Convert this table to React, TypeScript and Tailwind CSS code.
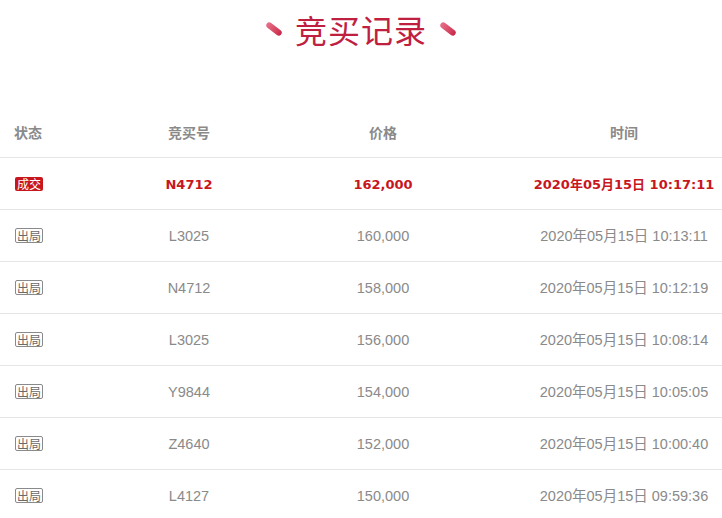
const rows = [
  { status: 'win', no: 'N4712', price: '162,000', time: '2020年05月15日 10:17:11' },
  { status: 'out', no: 'L3025', price: '160,000', time: '2020年05月15日 10:13:11' },
  { status: 'out', no: 'N4712', price: '158,000', time: '2020年05月15日 10:12:19' },
  { status: 'out', no: 'L3025', price: '156,000', time: '2020年05月15日 10:08:14' },
  { status: 'out', no: 'Y9844', price: '154,000', time: '2020年05月15日 10:05:05' },
  { status: 'out', no: 'Z4640', price: '152,000', time: '2020年05月15日 10:00:40' },
  { status: 'out', no: 'L4127', price: '150,000', time: '2020年05月15日 09:59:36' },
];

const Dash = () => (
  <span className="inline-block w-[18px] h-[6px] rounded-full rotate-[38deg] bg-gradient-to-r from-[#e8708a] to-[#c8234a]" />
);

export default function App() {
  return (
    <div className="w-[722px] h-[518px] overflow-hidden bg-white font-['Noto_Sans_CJK_SC',sans-serif]">
      {/* 标题 */}
      <div className="flex items-center justify-center gap-[12px] h-[58px]">
        <Dash />
        <h1 className="text-[32px] leading-[40px] text-[#c0203f] tracking-[1px]">竞买记录</h1>
        <Dash />
      </div>

      {/* 表格 */}
      <div className="mt-[49px]">
        <div className="grid grid-cols-[100px_178px_210px_1fr] h-[51px] items-center border-b border-[#e6e6e6] text-[14px] font-bold text-[#8a8a8a]">
          <div className="pl-[14px]">状态</div>
          <div className="text-center">竞买号</div>
          <div className="text-center">价格</div>
          <div className="text-center pl-[38px]">时间</div>
        </div>

        {rows.map((r, i) => {
          const win = r.status === 'win';
          return (
            <div
              key={i}
              className={`grid grid-cols-[100px_178px_210px_1fr] h-[52px] pt-[3px] items-center border-b border-[#e6e6e6] ${
                win
                  ? 'text-[#c8161e] font-bold font-["DejaVu_Sans","Noto_Sans_CJK_SC",sans-serif] text-[13px]'
                  : 'text-[#8a8a8a] font-["Liberation_Sans","Noto_Sans_CJK_SC",sans-serif] text-[14.5px]'
              }`}
            >
              <div className="pl-[15px]">
                {win ? (
                  <span className="inline-block bg-[#c8161e] text-white text-[12px] leading-[14px] px-[2px] rounded-[2px] font-normal font-['Noto_Sans_CJK_SC',sans-serif]">
                    成交
                  </span>
                ) : (
                  <span className="inline-block border border-[#8a8a8a] text-[#6a6a6a] text-[12px] leading-[13px] px-[1px] rounded-[2px] font-['Noto_Sans_CJK_SC',sans-serif]">
                    出局
                  </span>
                )}
              </div>
              <div className="text-center">{r.no}</div>
              <div className="text-center">{r.price}</div>
              <div className="text-center pl-[38px] whitespace-nowrap">{r.time}</div>
            </div>
          );
        })}
      </div>
    </div>
  );
}
